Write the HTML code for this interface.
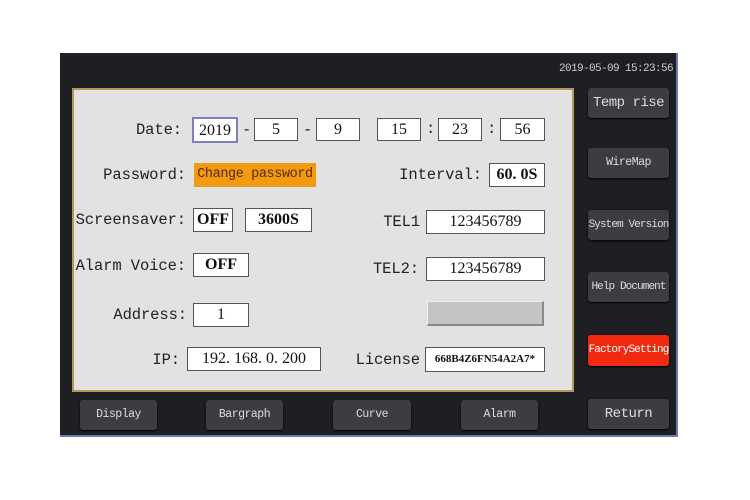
<!DOCTYPE html>
<html><head><meta charset="utf-8"><style>
body{margin:0;width:750px;height:500px;background:#fff;position:relative;overflow:hidden;font-family:"Liberation Mono","Liberation Serif",monospace;}
.scr{position:absolute;left:60px;top:53px;width:616px;height:382px;background:#1d1f23;border-right:2px solid #6a78b8;border-bottom:2px solid #6a78b8;}
.panel{position:absolute;left:72px;top:88px;width:498px;height:300px;background:#e2e2e2;border:2px solid #b8985a;}
.a{position:absolute;white-space:nowrap;}
.lbl{position:absolute;font-size:15.5px;color:#222;line-height:20px;font-family:"Liberation Mono",monospace;white-space:nowrap;text-align:right;letter-spacing:-0.1px;}
.box{position:absolute;background:#fff;border:1px solid #555;box-sizing:border-box;text-align:center;font-size:16px;font-family:"Liberation Serif",serif;color:#111;}
.btn{position:absolute;background:#3b3d41;border-radius:3px;color:#ddd;text-align:center;font-size:11.5px;font-family:"Liberation Mono",monospace;box-shadow:0 1px 2px #000;white-space:nowrap;letter-spacing:-0.5px;}
</style></head><body>
<div class="scr"></div>
<div class="a" style="left:559px;top:63px;color:#ccc;font-size:11px;font-family:'Liberation Mono',monospace;letter-spacing:-0.6px;">2019-05-09 15:23:56</div>
<div class="panel"></div>

<div class="lbl" style="right:568px;top:120px;">Date:</div>
<div class="box" style="left:192px;top:117px;width:46px;height:26px;line-height:24px;border:2px solid #7a80c0;">2019</div>
<div class="lbl" style="left:242px;top:120px;">-</div>
<div class="box" style="left:254px;top:118px;width:44px;height:23px;line-height:21px;">5</div>
<div class="lbl" style="left:303px;top:120px;">-</div>
<div class="box" style="left:316px;top:118px;width:44px;height:23px;line-height:21px;">9</div>
<div class="box" style="left:377px;top:118px;width:44px;height:23px;line-height:21px;">15</div>
<div class="lbl" style="left:426px;top:119px;">:</div>
<div class="box" style="left:438px;top:118px;width:44px;height:23px;line-height:21px;">23</div>
<div class="lbl" style="left:487px;top:119px;">:</div>
<div class="box" style="left:500px;top:118px;width:45px;height:23px;line-height:21px;">56</div>

<div class="lbl" style="right:564px;top:165px;">Password:</div>
<div class="a" style="left:194px;top:163px;width:122px;height:24px;background:#f29a12;color:#5a2a00;font-size:13.5px;line-height:24px;text-align:center;font-family:'Liberation Mono',monospace;letter-spacing:-0.4px;">Change password</div>
<div class="lbl" style="right:268px;top:165px;">Interval:</div>
<div class="box" style="left:489px;top:163px;width:56px;height:24px;line-height:22px;font-weight:bold;">60. 0S</div>

<div class="lbl" style="right:564px;top:210px;">Screensaver:</div>
<div class="box" style="left:193px;top:208px;width:40px;height:24px;line-height:22px;font-weight:bold;">OFF</div>
<div class="box" style="left:245px;top:208px;width:67px;height:24px;line-height:22px;font-weight:bold;">3600S</div>
<div class="lbl" style="right:330px;top:212px;">TEL1</div>
<div class="box" style="left:426px;top:210px;width:119px;height:24px;line-height:22px;">123456789</div>

<div class="lbl" style="right:564px;top:256px;">Alarm Voice:</div>
<div class="box" style="left:193px;top:253px;width:56px;height:24px;line-height:22px;font-weight:bold;">OFF</div>
<div class="lbl" style="right:331px;top:259px;">TEL2:</div>
<div class="box" style="left:426px;top:257px;width:119px;height:24px;line-height:22px;">123456789</div>

<div class="lbl" style="right:563px;top:305px;">Address:</div>
<div class="box" style="left:193px;top:303px;width:56px;height:24px;line-height:22px;">1</div>
<div class="a" style="left:427px;top:301px;width:117px;height:25px;background:#c4c4c4;border-top:1px solid #eee;border-left:1px solid #eee;border-bottom:2px solid #888;border-right:2px solid #888;box-sizing:border-box;"></div>

<div class="lbl" style="right:570px;top:350px;">IP:</div>
<div class="box" style="left:187px;top:347px;width:134px;height:24px;line-height:22px;">192. 168. 0. 200</div>
<div class="lbl" style="right:330px;top:350px;">License</div>
<div class="box" style="left:425px;top:347px;width:120px;height:25px;line-height:23px;font-size:11px;font-weight:bold;">668B4Z6FN54A2A7*</div>

<div class="btn" style="left:588px;top:88px;width:81px;height:30px;line-height:30px;font-size:14px;">Temp rise</div>
<div class="btn" style="left:588px;top:148px;width:81px;height:30px;line-height:30px;">WireMap</div>
<div class="btn" style="left:588px;top:210px;width:81px;height:30px;line-height:30px;font-size:11px;letter-spacing:-0.9px;">System Version</div>
<div class="btn" style="left:588px;top:272px;width:81px;height:30px;line-height:30px;font-size:11px;letter-spacing:-0.9px;">Help Document</div>
<div class="btn" style="left:588px;top:335px;width:81px;height:31px;line-height:31px;font-size:11px;letter-spacing:-0.9px;background:#f02a10;color:#fff;">FactorySetting</div>
<div class="btn" style="left:588px;top:399px;width:81px;height:30px;line-height:30px;font-size:14px;">Return</div>

<div class="btn" style="left:80px;top:400px;width:77px;height:30px;line-height:30px;">Display</div>
<div class="btn" style="left:206px;top:400px;width:77px;height:30px;line-height:30px;">Bargraph</div>
<div class="btn" style="left:333px;top:400px;width:78px;height:30px;line-height:30px;">Curve</div>
<div class="btn" style="left:461px;top:400px;width:77px;height:30px;line-height:30px;">Alarm</div>
</body></html>
